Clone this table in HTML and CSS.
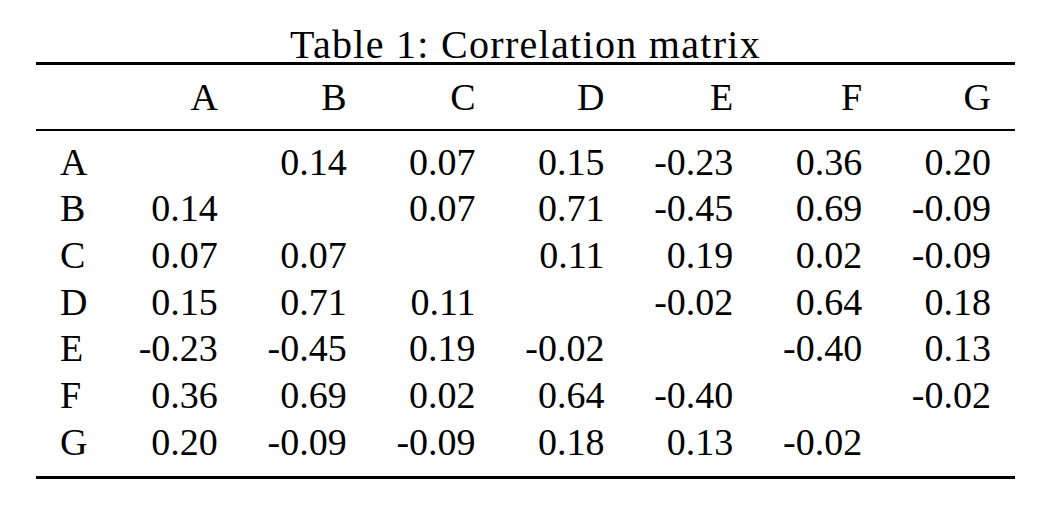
FILE: index.html
```html
<!DOCTYPE html>
<html>
<head>
<meta charset="utf-8">
<link rel="stylesheet" href="styles.css">
</head>
<body>
<div class="page">
  <div class="caption">Table 1: Correlation matrix</div>
  <div class="matrix">
    <div class="row head">
      <div class="label"></div>
      <div class="cell">A</div><div class="cell">B</div><div class="cell">C</div><div class="cell">D</div><div class="cell">E</div><div class="cell">F</div><div class="cell">G</div>
    </div>
    <div class="body">
      <div class="row"><div class="label">A</div><div class="cell"></div><div class="cell">0.14</div><div class="cell">0.07</div><div class="cell">0.15</div><div class="cell">-0.23</div><div class="cell">0.36</div><div class="cell">0.20</div></div>
      <div class="row"><div class="label">B</div><div class="cell">0.14</div><div class="cell"></div><div class="cell">0.07</div><div class="cell">0.71</div><div class="cell">-0.45</div><div class="cell">0.69</div><div class="cell">-0.09</div></div>
      <div class="row"><div class="label">C</div><div class="cell">0.07</div><div class="cell">0.07</div><div class="cell"></div><div class="cell">0.11</div><div class="cell">0.19</div><div class="cell">0.02</div><div class="cell">-0.09</div></div>
      <div class="row"><div class="label">D</div><div class="cell">0.15</div><div class="cell">0.71</div><div class="cell">0.11</div><div class="cell"></div><div class="cell">-0.02</div><div class="cell">0.64</div><div class="cell">0.18</div></div>
      <div class="row"><div class="label">E</div><div class="cell">-0.23</div><div class="cell">-0.45</div><div class="cell">0.19</div><div class="cell">-0.02</div><div class="cell"></div><div class="cell">-0.40</div><div class="cell">0.13</div></div>
      <div class="row"><div class="label">F</div><div class="cell">0.36</div><div class="cell">0.69</div><div class="cell">0.02</div><div class="cell">0.64</div><div class="cell">-0.40</div><div class="cell"></div><div class="cell">-0.02</div></div>
      <div class="row"><div class="label">G</div><div class="cell">0.20</div><div class="cell">-0.09</div><div class="cell">-0.09</div><div class="cell">0.18</div><div class="cell">0.13</div><div class="cell">-0.02</div><div class="cell"></div></div>
    </div>
  </div>
</div>
</body>
</html>
```
FILE: styles.css
```css
html, body {
  margin: 0;
  padding: 0;
  background: #ffffff;
}
body {
  font-family: "Liberation Serif", "Times New Roman", serif;
  color: #000000;
}
.page {
  margin-left: 36px;
  width: 979px;
}
.caption {
  padding-top: 28px;
  font-size: 40px;
  line-height: 34px;
  letter-spacing: 1.3px;
  text-align: center;
}
.matrix {
  border-top: 3px solid #000;
  border-bottom: 3px solid #000;
  font-size: 38px;
}
.row {
  display: grid;
  grid-template-columns: 29px repeat(7, 1fr);
  padding: 0 24px;
  height: 46.67px;
  line-height: 46.67px;
}
.row.head {
  height: 64px;
  line-height: 64px;
  border-bottom: 2px solid #000;
}
.body {
  padding-top: 7.67px;
  padding-bottom: 11px;
}
.label {
  text-align: left;
  white-space: nowrap;
}
.cell {
  text-align: right;
  white-space: nowrap;
}
```
